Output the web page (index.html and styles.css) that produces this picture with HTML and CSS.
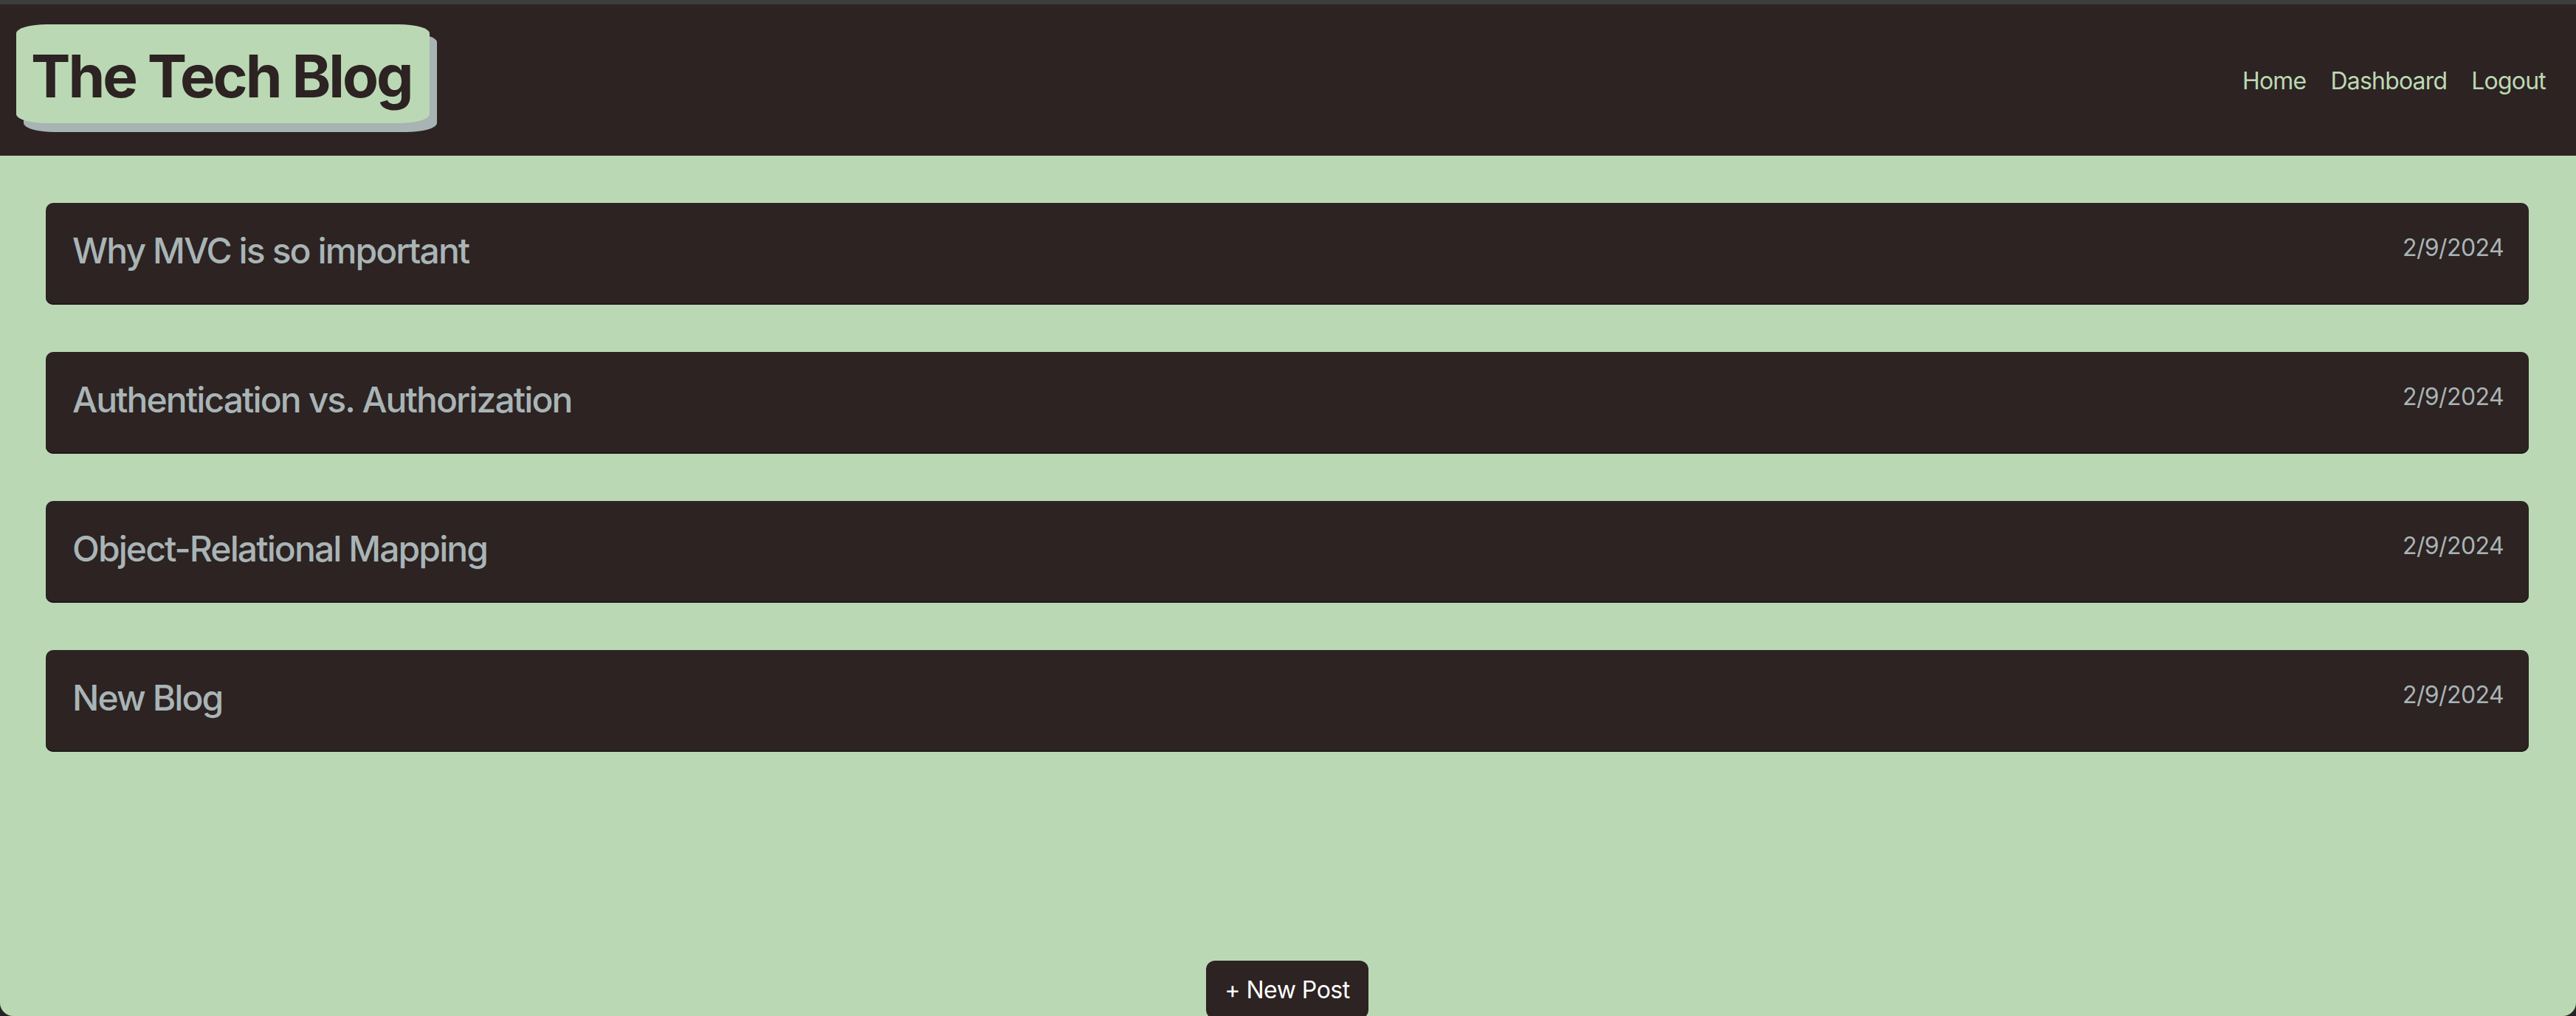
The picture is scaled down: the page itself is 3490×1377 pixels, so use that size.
FILE: index.html
```html
<!DOCTYPE html>
<html lang="en">
<head>
<meta charset="utf-8">
<title>The Tech Blog</title>
<link rel="stylesheet" href="styles.css">
</head>
<body>
<div class="page">
  <div class="topbar"></div>
  <header class="site-header">
    <a class="logo" href="#">The Tech Blog</a>
    <nav class="nav">
      <a href="#">Home</a>
      <a href="#">Dashboard</a>
      <a href="#">Logout</a>
    </nav>
  </header>
  <main class="main">
    <section class="posts">
      <article class="post">
        <h2 class="post-title">Why MVC is so important</h2>
        <span class="post-date">2/9/2024</span>
      </article>
      <article class="post">
        <h2 class="post-title">Authentication vs. Authorization</h2>
        <span class="post-date">2/9/2024</span>
      </article>
      <article class="post">
        <h2 class="post-title">Object-Relational Mapping</h2>
        <span class="post-date">2/9/2024</span>
      </article>
      <article class="post">
        <h2 class="post-title">New Blog</h2>
        <span class="post-date">2/9/2024</span>
      </article>
    </section>
    <div class="actions">
      <button class="new-post">+ New Post</button>
    </div>
  </main>
</div>
</body>
</html>
```

FILE: styles.css
```css
* { box-sizing: border-box; }

html, body {
  margin: 0;
  padding: 0;
  background: #242424;
  font-family: Inter, "Noto Sans", "Liberation Sans", sans-serif;
}

.page {
  height: 100vh;
  display: flex;
  flex-direction: column;
  overflow: hidden;
}

.topbar {
  height: 6px;
  background: #3d3d3d;
  flex: none;
}

.site-header {
  flex: none;
  height: 205px;
  background: #2c2322;
  display: flex;
  justify-content: space-between;
  align-items: flex-start;
  padding: 27px 41px 0 22px;
}

.logo {
  display: block;
  background: #bbd8b4;
  color: #2c2322;
  text-decoration: none;
  font-weight: 700;
  font-size: 80px;
  line-height: 97px;
  letter-spacing: -3px;
  padding: 21px 24px 16px 20px;
  border-radius: 42px / 12px;
  box-shadow: 10px 12px 0 #a8b3b4;
}

.nav {
  margin-top: 57px;
  display: flex;
  gap: 33px;
}

.nav a {
  color: #bcd8b3;
  text-decoration: none;
  font-size: 32px;
  line-height: 39px;
  letter-spacing: -0.8px;
}

.main {
  flex: 1;
  background: #bbd8b4;
  border-radius: 0 0 18px 18px;
  overflow: hidden;
  padding: 64px 64px 0 62px;
}

.posts {
  display: flex;
  flex-direction: column;
  gap: 64px;
}

.post {
  height: 138px;
  background: #2c2322;
  border-radius: 10px;
  box-shadow: inset 0 -2px 0 #1f1a19;
  display: flex;
  justify-content: space-between;
  align-items: flex-start;
  padding: 36px 34px 0 36px;
}

.post-title {
  margin: 0;
  font-size: 48px;
  line-height: 58px;
  font-weight: 500;
  color: #a9b4b6;
  letter-spacing: -1.9px;
}

.post-date {
  margin-top: 5px;
  font-size: 32px;
  line-height: 39px;
  color: #a9b4b6;
  letter-spacing: -0.6px;
}

.actions {
  margin-top: 283px;
  display: flex;
  justify-content: center;
}

.new-post {
  background: #2c2322;
  color: #ffffff;
  border: none;
  border-radius: 12px;
  font-family: inherit;
  font-size: 32px;
  line-height: 39px;
  letter-spacing: -0.5px;
  padding: 20px 25px;
}
```
